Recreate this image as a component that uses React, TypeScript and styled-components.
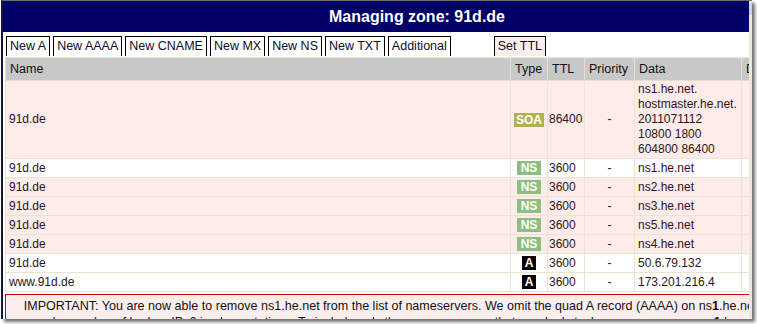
import styled, { createGlobalStyle } from "styled-components";

const GlobalStyle = createGlobalStyle`
  html, body {
    margin: 0;
    padding: 0;
    background: #fff;
    overflow: hidden;
  }
`;

const Stage = styled.div`
  padding-left: 1px;
  width: 757px;
  height: 324px;
  box-sizing: border-box;
`;

const Window = styled.div`
  width: 751px;
  height: 319px;
  box-sizing: border-box;
  border-top: 1px solid #6e6e6e;
  border-left: 2px solid #14143e;
  display: flex;
  box-shadow: 3px 3px 3px rgba(0, 0, 0, 0.55);
  background: #fff;
`;

const Viewport = styled.div`
  flex: 1;
  overflow: hidden;
  font-family: "Liberation Sans", Arial, sans-serif;
`;

const ScrollStrip = styled.div`
  width: 3px;
  background: #ece9dc;
  display: flex;
  flex-direction: column;
`;

const Thumb = styled.div`
  margin-top: 2px;
  height: 12px;
  background: #c4d3f0;
`;

const Content = styled.div`
  width: 828px;
`;

const Header = styled.div`
  height: 31px;
  background: #000066;
  color: #fff;
  font-weight: bold;
  font-size: 16px;
  display: flex;
  align-items: center;
  justify-content: center;
`;

const Tabs = styled.div`
  display: flex;
  gap: 3px;
  margin-top: 4px;
  padding-left: 3px;
  height: 20px;
`;

const Tab = styled.div<{ $pink?: boolean; $spaced?: boolean }>`
  box-sizing: border-box;
  height: 20px;
  border: 1px solid #000;
  border-bottom: none;
  padding: 0 3px;
  font-size: 12.5px;
  line-height: 19px;
  color: #0d0d2a;
  background: ${(p) => (p.$pink ? "#fdeeee" : "#fff")};
  margin-left: ${(p) => (p.$spaced ? "40px" : "0")};
`;

const Table = styled.table`
  margin: 1px 0 0 2px;
  width: 824px;
  border-collapse: collapse;
  table-layout: fixed;
`;

const Th = styled.th<{ $w: number }>`
  width: ${(p) => p.$w}px;
  height: 23px;
  box-sizing: border-box;
  padding: 0 4px;
  background: #c8c8c8;
  border: 1px solid #e3dfd1;
  border-top-color: #ece8da;
  text-align: left;
  font-weight: normal;
  font-size: 12.5px;
  color: #111;
  white-space: nowrap;
  overflow: hidden;
`;

const Row = styled.tr<{ $pink?: boolean }>`
  background: ${(p) => (p.$pink ? "#fdecea" : "#fff")};
`;

const Td = styled.td<{ $align?: string; $pad?: number }>`
  height: 16px;
  padding: 1px ${(p) => p.$pad ?? 3}px;
  border: 1px solid #ebe4d0;
  font-size: 12px;
  line-height: 15px;
  color: #2a1420;
  text-align: ${(p) => p.$align ?? "left"};
  white-space: nowrap;
  overflow: hidden;
`;

const badgeColors: Record<string, string> = {
  SOA: "#b2b24a",
  NS: "#8fbf80",
  A: "#000",
};

const badgePad: Record<string, number> = { SOA: 2, NS: 4, A: 3 };

const Badge = styled.span<{ $kind: string }>`
  display: inline-block;
  vertical-align: middle;
  padding: 0 ${(p) => badgePad[p.$kind]}px;
  line-height: 14px;
  font-size: 12px;
  font-weight: bold;
  color: #fff;
  background: ${(p) => badgeColors[p.$kind]};
`;

const Notice = styled.div`
  margin: 2px 0 0 2px;
  width: 824px;
  box-sizing: border-box;
  border: 1px solid #d40000;
  background: #fdeeee;
  padding: 3px 9px 3px 0;
  text-align: center;
  font-size: 12.55px;
  line-height: 16px;
  color: #111;
  white-space: nowrap;
`;

type Rec = {
  name: string;
  type: string;
  ttl: string;
  data: string[];
  pink: boolean;
};

const records: Rec[] = [
  {
    name: "91d.de",
    type: "SOA",
    ttl: "86400",
    data: ["ns1.he.net.", "hostmaster.he.net.", "2011071112", "10800 1800", "604800 86400"],
    pink: true,
  },
  { name: "91d.de", type: "NS", ttl: "3600", data: ["ns1.he.net"], pink: false },
  { name: "91d.de", type: "NS", ttl: "3600", data: ["ns2.he.net"], pink: true },
  { name: "91d.de", type: "NS", ttl: "3600", data: ["ns3.he.net"], pink: true },
  { name: "91d.de", type: "NS", ttl: "3600", data: ["ns5.he.net"], pink: true },
  { name: "91d.de", type: "NS", ttl: "3600", data: ["ns4.he.net"], pink: true },
  { name: "91d.de", type: "A", ttl: "3600", data: ["50.6.79.132"], pink: false },
  { name: "www.91d.de", type: "A", ttl: "3600", data: ["173.201.216.4"], pink: false },
];

const tabs = ["New A", "New AAAA", "New CNAME", "New MX", "New NS", "New TXT", "Additional"];

export default function App() {
  return (
    <>
      <GlobalStyle />
      <Stage>
        <Window>
          <Viewport>
            <Content>
              <Header>Managing zone: 91d.de</Header>
              <Tabs>
                {tabs.map((t) => (
                  <Tab key={t}>{t}</Tab>
                ))}
                <Tab $pink $spaced>
                  Set TTL
                </Tab>
              </Tabs>
              <Table>
                <thead>
                  <tr>
                    <Th $w={505}>Name</Th>
                    <Th $w={37}>Type</Th>
                    <Th $w={37}>TTL</Th>
                    <Th $w={50}>Priority</Th>
                    <Th $w={107}>Data</Th>
                    <Th $w={44}>DDNS</Th>
                    <Th $w={44}>Delete</Th>
                  </tr>
                </thead>
                <tbody>
                  {records.map((r, i) => (
                    <Row key={i} $pink={r.pink}>
                      <Td>{r.name}</Td>
                      <Td $align="center" $pad={0}>
                        <Badge $kind={r.type}>{r.type}</Badge>
                      </Td>
                      <Td $pad={1}>{r.ttl}</Td>
                      <Td $align="center">-</Td>
                      <Td>
                        {r.data.map((d, j) => (
                          <div key={j}>{d}</div>
                        ))}
                      </Td>
                      <Td />
                      <Td />
                    </Row>
                  ))}
                </tbody>
              </Table>
              <Notice>
                IMPORTANT: You are now able to remove ns1.he.net from the list of nameservers. We omit the quad A
                record (AAAA) on ns<b>1</b>.he.net to work
                <br />
                around a number of broken IPv6 implementations. To include only those nameservers that are dual
                stack, you may remove ns<b>1</b>.he.net from the
              </Notice>
            </Content>
          </Viewport>
          <ScrollStrip>
            <Thumb />
          </ScrollStrip>
        </Window>
      </Stage>
    </>
  );
}
